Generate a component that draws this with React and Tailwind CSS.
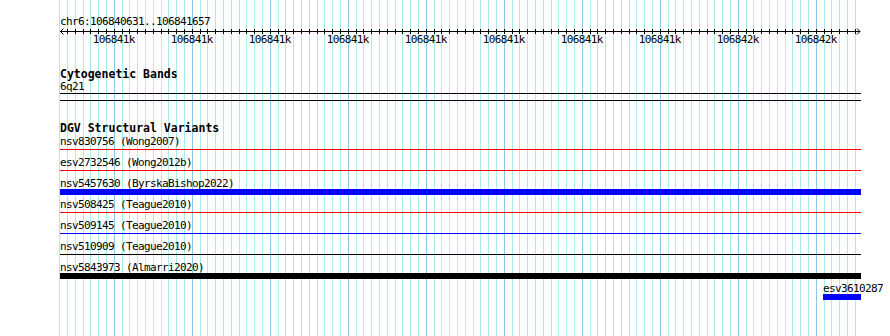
import React from "react";

const START = 106840631;
const END = 106841657;
const SCALE = 0.78;
const LEFT = 60;

const toX = (bp) => LEFT + (bp - START) * SCALE;

const gridBps = [];
for (let bp = Math.floor(START / 10) * 10; bp <= END; bp += 10) {
  gridBps.push(bp);
}
const majorBps = gridBps.filter((bp) => bp % 100 === 0);

const variants = [
  { label: "nsv830756 (Wong2007)", kind: "line", color: "bg-[#ff0000]" },
  { label: "esv2732546 (Wong2012b)", kind: "line", color: "bg-[#ff0000]" },
  { label: "nsv5457630 (ByrskaBishop2022)", kind: "bar", color: "bg-[#0000ff]" },
  { label: "nsv508425 (Teague2010)", kind: "line", color: "bg-[#ff0000]" },
  { label: "nsv509145 (Teague2010)", kind: "line", color: "bg-[#0000ff]" },
  { label: "nsv510909 (Teague2010)", kind: "line", color: "bg-black" },
  { label: "nsv5843973 (Almarri2020)", kind: "bar", color: "bg-black" },
];

function Grid() {
  return (
    <svg
      className="absolute left-0 top-0"
      width="890"
      height="336"
      shapeRendering="crispEdges"
    >
      {gridBps.map((bp) => {
        const x = Math.round(toX(bp)) + 0.5;
        const major = bp % 100 === 0;
        return (
          <line
            key={bp}
            x1={x}
            x2={x}
            y1={0}
            y2={336}
            stroke={major ? "#8cc8e6" : "#aaecee"}
            strokeWidth="1"
          />
        );
      })}
    </svg>
  );
}

function Ruler() {
  return (
    <svg className="block" width="802" height="7" shapeRendering="crispEdges">
      <line x1="0" x2="800" y1="3.5" y2="3.5" stroke="black" />
      {gridBps
        .filter((bp) => toX(bp) >= LEFT + 2 && toX(bp) <= LEFT + 796)
        .map((bp) => {
          const x = Math.round(toX(bp) - LEFT) + 0.5;
          return <line key={bp} x1={x} x2={x} y1="1" y2="6" stroke="black" />;
        })}
      <polyline
        points="3.5,0.5 0.5,3.5 3.5,6.5"
        fill="none"
        stroke="black"
        shapeRendering="auto"
      />
      <polyline
        points="797,0.5 800,3.5 797,6.5"
        fill="none"
        stroke="black"
        shapeRendering="auto"
      />
    </svg>
  );
}

function VariantRow({ v }) {
  return (
    <div className="h-[21px]">
      <div className="leading-[11px] whitespace-nowrap">{v.label}</div>
      {v.kind === "bar" ? (
        <div className={`h-[6px] w-[801px] ${v.color}`} />
      ) : (
        <div className="h-[6px] w-[801px]">
          <div className={`mt-[2px] h-px ${v.color}`} />
        </div>
      )}
    </div>
  );
}

export default function App() {
  return (
    <div className="relative w-[890px] h-[336px] overflow-hidden bg-white text-black">
      <Grid />
      <div className="relative pl-[60px] pt-[16px] font-['DejaVu_Sans_Mono',monospace] text-[11px] tracking-[-0.62px]">
        <div className="leading-[12px] whitespace-nowrap">
          chr6:106840631..106841657
        </div>
        <Ruler />
        <div className="flex pl-[14.82px] leading-[10px]">
          {majorBps.map((bp) => (
            <div key={bp} className="w-[78px] shrink-0 text-center">
              {Math.round(bp / 1000)}k
            </div>
          ))}
        </div>

        <div className="mt-[23px] font-bold text-[11.5px] tracking-normal leading-[13px]">
          Cytogenetic Bands
        </div>
        <div className="leading-[11px]">6q21</div>
        <div className="mt-[1px] h-[8px] w-[801px] border-y border-black" />

        <div className="mt-[21px] font-bold text-[11.5px] tracking-normal leading-[13px]">
          DGV Structural Variants
        </div>
        <div className="mt-[1px]">
          {variants.map((v) => (
            <VariantRow key={v.label} v={v} />
          ))}
          <div className="h-[21px] pl-[763px]">
            <div className="leading-[11px] whitespace-nowrap">esv3610287</div>
            <div className="h-[6px] w-[38px] bg-[#0000ff]" />
          </div>
        </div>
      </div>
    </div>
  );
}
